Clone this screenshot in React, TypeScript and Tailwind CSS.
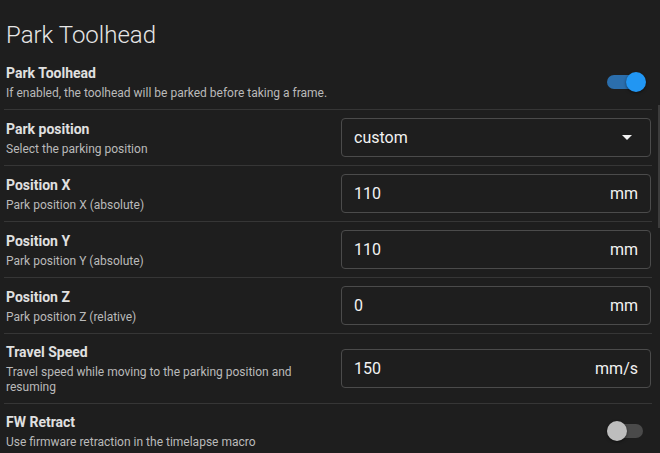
import React from 'react';

interface Setting {
  label: string;
  description: string;
  control: React.ReactNode;
}

function Toggle({ on }: { on: boolean }) {
  return (
    <div className="relative w-[36px] h-[14px] mr-[8px]">
      <div
        className={
          on
            ? 'absolute inset-0 rounded-full bg-[#2b6eac]'
            : 'absolute inset-0 rounded-full bg-[#4a4a4a]'
        }
      />
      <div
        className={
          on
            ? 'absolute top-[-3px] left-[19px] w-[20px] h-[20px] rounded-full bg-[#2196f3] shadow-[0_1px_3px_rgba(0,0,0,0.5)]'
            : 'absolute top-[-3px] left-0 w-[20px] h-[20px] rounded-full bg-[#bdbdbd] shadow-[0_1px_3px_rgba(0,0,0,0.5)]'
        }
      />
    </div>
  );
}

function Field({ value, unit }: { value: string; unit: string }) {
  return (
    <div className="w-[310px] h-[39px] rounded border border-[#4b4b4b] flex items-center justify-between pl-3 pr-3 text-[16px] text-[#f2f2f2]">
      <span>{value}</span>
      <span>{unit}</span>
    </div>
  );
}

function Select({ value }: { value: string }) {
  return (
    <div className="w-[310px] h-[39px] rounded border border-[#4b4b4b] flex items-center justify-between pl-3 pr-[18px] text-[16px] text-[#f2f2f2]">
      <span>{value}</span>
      <svg width="10" height="5" viewBox="0 0 10 5">
        <path d="M0 0 L10 0 L5 5 Z" fill="#f2f2f2" />
      </svg>
    </div>
  );
}

export default function App() {
  const settings: Setting[] = [
    {
      label: 'Park Toolhead',
      description: 'If enabled, the toolhead will be parked before taking a frame.',
      control: <Toggle on />,
    },
    {
      label: 'Park position',
      description: 'Select the parking position',
      control: <Select value="custom" />,
    },
    {
      label: 'Position X',
      description: 'Park position X (absolute)',
      control: <Field value="110" unit="mm" />,
    },
    {
      label: 'Position Y',
      description: 'Park position Y (absolute)',
      control: <Field value="110" unit="mm" />,
    },
    {
      label: 'Position Z',
      description: 'Park position Z (relative)',
      control: <Field value="0" unit="mm" />,
    },
    {
      label: 'Travel Speed',
      description: 'Travel speed while moving to the parking position and resuming',
      control: <Field value="150" unit="mm/s" />,
    },
    {
      label: 'FW Retract',
      description: 'Use firmware retraction in the timelapse macro',
      control: <Toggle on={false} />,
    },
  ];

  return (
    <div
      className="relative w-[660px] h-[453px] overflow-hidden bg-[#1e1e1e] pl-1 pr-2 pt-[19px]"
      style={{ fontFamily: 'Roboto, "Noto Sans", sans-serif' }}
    >
      <h2 className="pl-[2px] mb-1 text-[24px] leading-8 font-light text-[#e6e6e6]">
        Park Toolhead
      </h2>

      {settings.map((s, i) => (
        <div
          key={i}
          className={
            i === settings.length - 1
              ? 'flex items-center py-2 pl-[2px] pr-[1px]'
              : 'flex items-center py-2 pl-[2px] pr-[1px] border-b border-[#363636]'
          }
        >
          <div className="flex-1 min-w-0">
            <div className="text-[14px] leading-5 font-bold text-[#e0e0e0]">
              {s.label}
            </div>
            <div className="mt-[3px] text-[12px] leading-[15px] text-[#bababa]">
              {s.description}
            </div>
          </div>
          <div className="ml-3 w-[310px] shrink-0 flex justify-end">{s.control}</div>
        </div>
      ))}

      {/* scrollbar */}
      <div className="absolute right-0 top-[105px] w-[2px] h-[123px] bg-[#3c3c3c]" />
    </div>
  );
}
